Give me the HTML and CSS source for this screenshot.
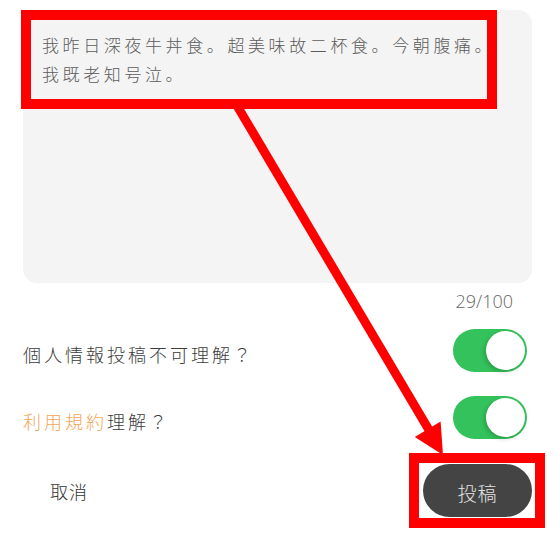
FILE: index.html
```html
<!DOCTYPE html>
<html lang="ja">
<head>
<meta charset="utf-8">
<title>投稿</title>
<link rel="stylesheet" href="styles.css">
</head>
<body>
<div class="page">
  <div class="textbox">我昨日深夜牛丼食。超美味故二杯食。今朝腹痛。<br>我既老知号泣。</div>
  <div class="counter">29/100</div>
  <div class="row row-first">
    <span class="label">個人情報投稿不可理解？</span>
    <span class="toggle"></span>
  </div>
  <div class="row row-second">
    <span class="label"><span class="link">利用規約</span>理解？</span>
    <span class="toggle"></span>
  </div>
  <div class="actions">
    <span class="cancel">取消</span>
    <span class="submit">投稿</span>
  </div>
</div>
<svg class="annotation" width="555" height="536" viewBox="0 0 555 536">
  <rect x="26" y="15" width="466" height="89" fill="none" stroke="#ff0000" stroke-width="10"/>
  <line x1="236" y1="104" x2="429" y2="430" stroke="#ff0000" stroke-width="9"/>
  <polygon points="443,455 414.8,436.9 440.6,421.5" fill="#ff0000"/>
  <rect x="414" y="458" width="126" height="65" fill="none" stroke="#ff0000" stroke-width="10"/>
</svg>
</body>
</html>
```
FILE: styles.css
```css
html, body {
  margin: 0;
  padding: 0;
  background: #ffffff;
}
body {
  width: 555px;
  height: 536px;
  overflow: hidden;
  position: relative;
  font-family: "Noto Sans CJK JP", "Noto Sans", sans-serif;
}
.page {
  padding: 10px 23px 0 23px;
}
.textbox {
  box-sizing: border-box;
  height: 273px;
  background: #f4f4f4;
  border-radius: 14px;
  padding: 20px 19px 0 19px;
  font-size: 17px;
  font-weight: 300;
  line-height: 29px;
  letter-spacing: 3.6px;
  color: #5c5c5c;
  white-space: nowrap;
}
.counter {
  margin-top: 7px;
  padding-right: 19px;
  text-align: right;
  font-family: "Open Sans", "Liberation Sans", sans-serif;
  font-weight: 300;
  font-size: 18px;
  line-height: 22px;
  color: #666666;
}
.row {
  display: flex;
  align-items: center;
  justify-content: space-between;
  height: 43px;
  padding-right: 5px;
}
.row-first {
  margin-top: 17px;
}
.row-second {
  margin-top: 24px;
}
.label {
  font-size: 18px;
  font-weight: 300;
  line-height: 24px;
  letter-spacing: 3px;
  color: #3c3c3c;
  padding-top: 6px;
}
.link {
  color: #f2a65a;
}
.toggle {
  position: relative;
  width: 74px;
  height: 43px;
  border-radius: 22px;
  background: #34c25c;
}
.toggle::after {
  content: "";
  position: absolute;
  right: 2px;
  top: 2px;
  width: 39px;
  height: 39px;
  border-radius: 50%;
  background: #ffffff;
  box-shadow: -2px 2px 4px rgba(0, 0, 0, 0.18);
}
.actions {
  margin-top: 25px;
  display: flex;
  align-items: center;
  justify-content: space-between;
  height: 53px;
}
.cancel {
  padding-left: 27px;
  font-size: 18px;
  font-weight: 300;
  line-height: 24px;
  letter-spacing: 1px;
  color: #333333;
}
.submit {
  width: 109px;
  height: 53px;
  border-radius: 27px;
  background: #444444;
  color: #e4e4e4;
  font-size: 19px;
  font-weight: 300;
  letter-spacing: 1px;
  display: flex;
  align-items: center;
  justify-content: center;
  padding-top: 3px;
  box-sizing: border-box;
}
.annotation {
  position: absolute;
  left: 0;
  top: 0;
  pointer-events: none;
}
```
